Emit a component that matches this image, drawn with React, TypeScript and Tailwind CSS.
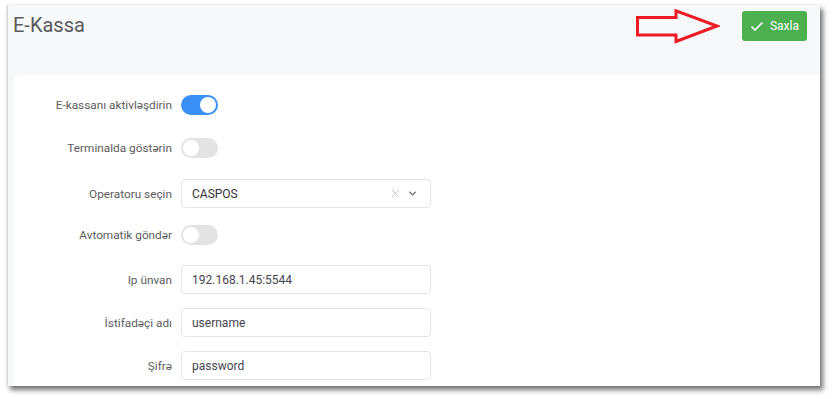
import { X, ChevronDown } from "lucide-react";

function Toggle({ on }: { on?: boolean }) {
  return (
    <div
      className={`w-[37px] h-[20px] rounded-full flex items-center px-[2px] ${
        on ? "bg-[#3a8ff5] justify-end" : "bg-[#e3e3e3] justify-start"
      }`}
    >
      <div className="w-[16px] h-[16px] rounded-full bg-white" />
    </div>
  );
}

function Row({
  label,
  className,
  children,
}: {
  label: string;
  className: string;
  children: React.ReactNode;
}) {
  return (
    <div className={`flex items-center ${className}`}>
      <div className="w-[159px] text-right text-[11.8px] text-[#5c5c5c] leading-[16px]">{label}</div>
      <div className="ml-[9px]">{children}</div>
    </div>
  );
}

function TextBox({ value }: { value: string }) {
  return (
    <div className="w-[250px] h-[29px] border border-[#e4e4e6] rounded-[4px] flex items-center px-[10px] text-[12px] text-[#45434f]">
      {value}
    </div>
  );
}

export default function App() {
  return (
    <div
      className="w-[832px] h-[399px] bg-white pt-[5px] pl-[7px] overflow-hidden"
      style={{ fontFamily: "Roboto, 'Noto Sans', sans-serif" }}
    >
      <div className="w-[813px] h-[381px] bg-[#f7f8fa] border-l border-[#d6d6d6] shadow-[3px_4px_5px_rgba(0,0,0,0.55),0_0_2px_rgba(0,0,0,0.12)] flex flex-col overflow-hidden">
        {/* header */}
        <div className="h-[70px] flex items-start justify-between pl-[5px] pr-[13px] shrink-0">
          <h1 className="mt-[8px] text-[20px] leading-[24px] text-[#5a5a5a] font-normal">E-Kassa</h1>
          <div className="flex items-start">
            <svg width="84" height="36" viewBox="0 0 84 36" className="mt-[4px] mr-[22px]">
              <polygon
                points="1.5,8.5 40,8.5 40,1.8 81,17 40,32.5 40,26 1.5,26"
                fill="none"
                stroke="#ec1c24"
                strokeWidth="3"
              />
            </svg>
            <button className="mt-[6px] h-[30px] w-[65px] rounded-[3px] bg-[#4caf50] text-white text-[12px] font-normal flex items-center justify-center gap-[6px]">
              <svg width="14" height="14" viewBox="0 0 14 14" fill="none">
                <polyline points="1.5,7.5 5,11 12.5,3.5" stroke="white" strokeWidth="1.7" />
              </svg>
              Saxla
            </button>
          </div>
        </div>

        {/* card */}
        <div className="flex-1 ml-[5px] bg-white rounded-tl-[6px] pt-[20px]">
          <Row label="E-kassanı aktivləşdirin" className="h-[20px]">
            <Toggle on />
          </Row>
          <Row label="Terminalda göstərin" className="h-[20px] mt-[23px]">
            <Toggle />
          </Row>
          <Row label="Operatoru seçin" className="h-[29px] mt-[21px]">
            <div className="w-[250px] h-[29px] border border-[#e4e4e6] rounded-[4px] flex items-center pl-[10px] pr-[12px] text-[12px] text-[#333]">
              <span className="flex-1">CASPOS</span>
              <X size={13} strokeWidth={1.3} className="text-[#a8a8ae] mr-[5px]" />
              <ChevronDown size={11} strokeWidth={3} className="text-[#666]" />
            </div>
          </Row>
          <Row label="Avtomatik göndər" className="h-[20px] mt-[17px]">
            <Toggle />
          </Row>
          <Row label="Ip ünvan" className="h-[29px] mt-[20px]">
            <TextBox value="192.168.1.45:5544" />
          </Row>
          <Row label="İstifadəçi adı" className="h-[29px] mt-[14px]">
            <TextBox value="username" />
          </Row>
          <Row label="Şifrə" className="h-[29px] mt-[14px]">
            <TextBox value="password" />
          </Row>
        </div>
      </div>
    </div>
  );
}
